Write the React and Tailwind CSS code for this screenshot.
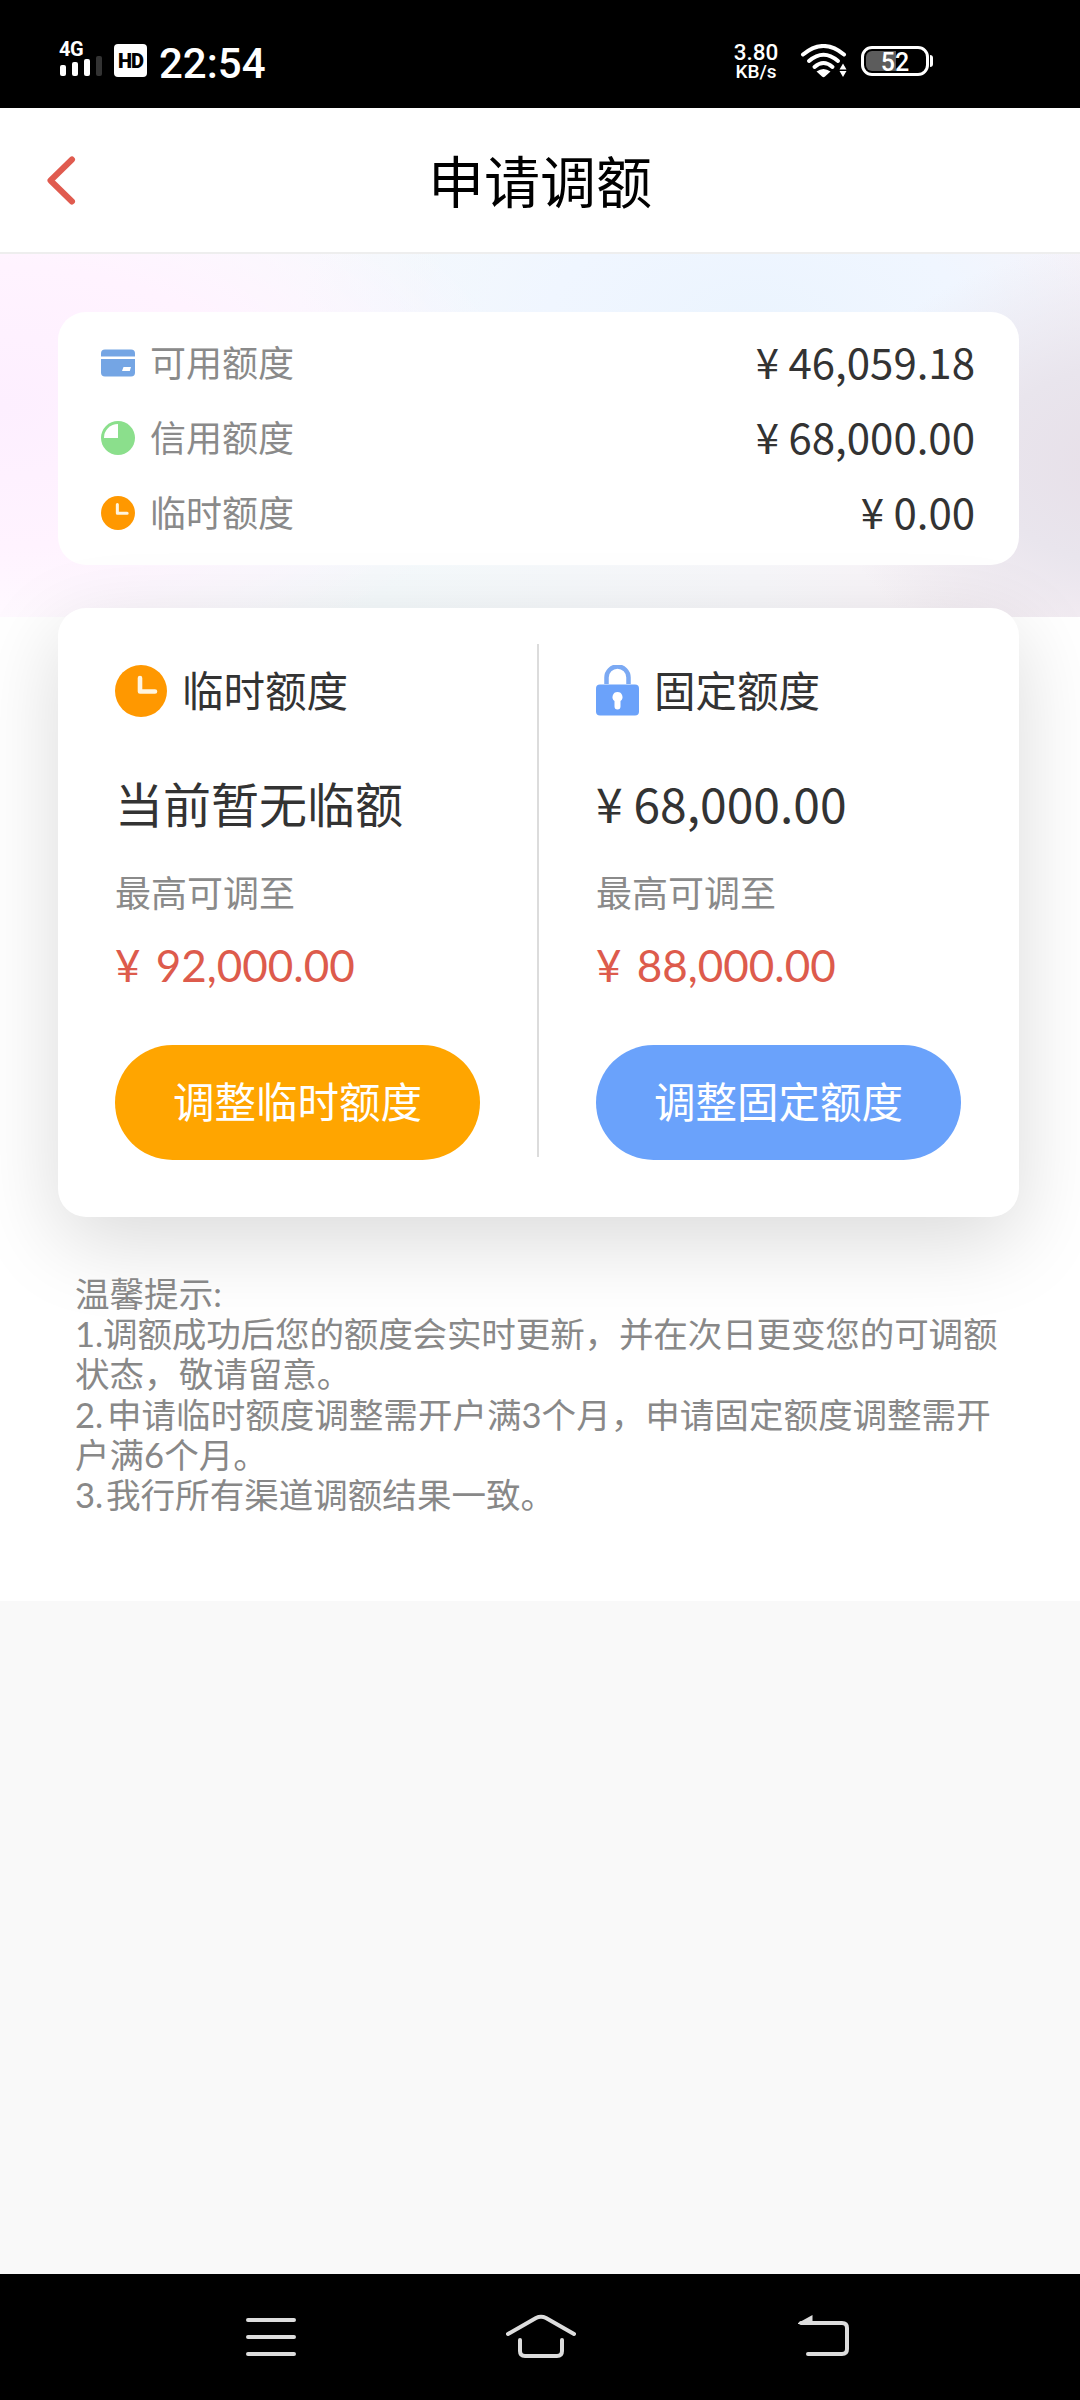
import clsx from "clsx";

const summary = [
    { label: "可用额度", amount: "46,059.18", Icon: CardIcon },
    { label: "信用额度", amount: "68,000.00", Icon: PieIcon },
    { label: "临时额度", amount: "0.00", Icon: SmallClockIcon },
];

const tips = [
    { no: "1.", noClass: "w-7", text: "调额成功后您的额度会实时更新，并在次日更变您的可调额", textClass: "tracking-[-0.150px]" },
    { text: "状态，敬请留意。" },
    { no: "2.", noClass: "w-[32px]", text: "申请临时额度调整需开户满3个月，申请固定额度调整需开" },
    { text: "户满6个月。" },
    { no: "3.", noClass: "w-[31px]", text: "我行所有渠道调额结果一致。" },
];

function CardIcon() {
    return (
        <svg width="34" height="34" viewBox="0 0 34 34">
            <rect x="0" y="3.5" width="34" height="27" rx="4" fill="#74a5e4" />
            <rect x="0" y="10.5" width="34" height="2.5" fill="#fff" />
            <path d="M22.5 21h7.5l-1.2 4h-7.8z" fill="#fff" />
        </svg>
    );
}

function PieIcon() {
    return (
        <svg width="34" height="34" viewBox="0 0 34 34">
            <circle cx="17" cy="17" r="17" fill="#8bdf8c" />
            <path d="M17 17H3A14 14 0 0 1 17 3z" fill="#fff" />
        </svg>
    );
}

function SmallClockIcon() {
    return <ClockIcon className="size-[34px]" />;
}

function ClockIcon({ className }) {
    return (
        <svg className={className} viewBox="0 0 52 52">
            <circle cx="26" cy="26" r="26" fill="#ff9800" />
            <path d="M25 13v13.5h15" fill="none" stroke="#fff5e0" strokeWidth="4.6" strokeLinecap="round" strokeLinejoin="round" />
        </svg>
    );
}

function LockIcon() {
    return (
        <svg width="43" height="52" viewBox="0 0 43 52">
            <path d="M10.5 19v-6.5a11 11 0 0 1 22 0V19" fill="none" stroke="#7ba9f3" strokeWidth="4.5" />
            <rect x="0" y="19.5" width="43" height="31" rx="4" fill="#6ba2fa" />
            <path d="M21.5 27a5 5 0 0 1 3 9v5.500a3 3 0 0 1-6 0V36a5 5 0 0 1 3-9z" fill="#fff" />
        </svg>
    );
}

function StatusBar() {
    return (
        <div className="flex h-[108px] items-start bg-black font-[Roboto,sans-serif] text-white">
            <div className="ml-[59px] mt-[39px] w-[43px]">
                <div className="h-[17px] text-[20px] leading-[21px] font-bold tracking-[-0.5px]">4G</div>
                <div className="ml-px flex h-5 items-end gap-[6px]">
                    <span className="h-[11px] w-[6px] rounded-[2px] bg-white" />
                    <span className="h-[14px] w-[6px] rounded-[2px] bg-white" />
                    <span className="h-[17px] w-[6px] rounded-[2px] bg-white" />
                    <span className="h-5 w-[6px] rounded-[2px] bg-[#333]" />
                </div>
            </div>
            <div className="ml-3 mt-11 flex h-[33px] w-[33px] items-center justify-center rounded-[4px] bg-white text-[20px] font-black tracking-[-1px] text-black">
                HD
            </div>
            <div className="ml-[12px] mt-[40px] w-[110px] text-[42px] leading-[48px] font-medium">22:54</div>
            <div className="ml-[464px] mt-[40px] w-[46px] text-center whitespace-nowrap">
                <div className="h-[23px] text-[22.500px] leading-[25px] font-medium">3.80</div>
                <div className="h-5 text-[19px] leading-[18px] font-medium">KB/s</div>
            </div>
            <svg className="ml-[21px] mt-11" width="48" height="34" viewBox="0 0 48 34">
                <g fill="none" stroke="#fff" strokeWidth="4" strokeLinecap="round">
                    <path d="M3 10.500Q23.500-6.500 44 10.500" />
                    <path d="M9 17Q23.500 4.500 38 17" />
                    <path d="M14.500 23Q23.500 15 32.500 23" />
                </g>
                <path d="M16.500 27.500Q23.500 22.500 30.500 27.500L25 32.600Q23.500 34 22 32.600z" fill="#fff" />
                <path d="M43 19.500l3.500 6h-7zM43 33l3.500-6h-7z" fill="#fff" />
            </svg>
            <div className="ml-[13px] mt-[46px] flex items-center">
                <div className="relative flex h-[30px] w-[68px] items-center justify-center rounded-[11px] border-[3px] border-white text-[25px] leading-none font-medium">
                    <span className="absolute left-[2px] top-[2px] h-5 w-[30px] rounded-l-[6px] bg-[#5c5c5c]" />
                    <span className="relative pt-[2px]">52</span>
                </div>
                <span className="ml-px h-3 w-[3px] rounded-r-[3px] bg-white" />
            </div>
        </div>
    );
}

function QuotaColumn({ icon, title, current, currentClass, max, button, buttonClass }) {
    return (
        <div className="pl-[57px] pt-[57px]">
            <div className="flex h-[52px] items-center">
                {icon}
                <span className="ml-[15px] text-[41.500px]">{title}</span>
            </div>
            <div className={clsx("mt-[58px] flex h-[60px] items-center whitespace-pre text-[48px] leading-none", currentClass)}>
                {current}
            </div>
            <div className="mt-[38px] flex h-10 items-center text-[36px] text-[#8a8a8a]">最高可调至</div>
            <div className="mt-[27px] flex h-[50px] items-center whitespace-pre text-[44px] [word-spacing:4px] text-[#dd5b4c]">{max}</div>
            <button className={clsx("mt-[55px] flex h-[115px] w-[365px] items-center justify-center rounded-full text-[41.500px] text-white", buttonClass)}>
                {button}
            </button>
        </div>
    );
}

function NavBar() {
    return (
        <div className="flex h-[126px] items-start bg-black pl-[246px] pt-[39px]">
            <svg width="50" height="46" viewBox="0 0 50 46" fill="none" stroke="#ddd" strokeWidth="4" strokeLinecap="round">
                <path d="M2 7h46M2 24h46M2 41h46" />
            </svg>
            <svg className="ml-[210px]" width="70" height="46" viewBox="0 0 70 46" fill="none" stroke="#ddd" strokeWidth="4" strokeLinecap="round" strokeLinejoin="round">
                <path d="M2 21L30 5Q35 2.500 40 5L68 21" />
                <path d="M14 27v11q0 5 5 5h32q5 0 5-5V27" />
            </svg>
            <svg className="ml-[222px]" width="52" height="46" viewBox="0 0 52 46" fill="none" stroke="#ddd" strokeWidth="4" strokeLinecap="round">
                <path d="M3 10h41q5 0 5 5v21q0 5-5 5H10" />
                <path d="M0 10L14.500 2v9H0z" fill="#ddd" stroke="none" />
            </svg>
        </div>
    );
}

export default function App() {
    return (
        <div className="flex h-[2400px] w-[1080px] flex-col overflow-hidden bg-[#f9f9f9] font-[Lato,'Noto_Sans_CJK_SC',sans-serif] text-[#333]">
            <StatusBar />

            <header className="grid h-[146px] grid-cols-[1fr_auto_1fr] items-center border-b-2 border-[#eee] bg-white">
                <svg className="ml-[46px]" width="30" height="49" viewBox="0 0 30 49" fill="none" stroke="#e05b4f" strokeWidth="6" strokeLinecap="round" strokeLinejoin="round">
                    <path d="M26 3.500L4.500 24.500L26 45.500" />
                </svg>
                <h1 className="pt-[3px] text-[56px] leading-none text-black">申请调额</h1>
            </header>

            <main
                className="h-[1347px] bg-white bg-[radial-gradient(520px_280px_at_0%_42%,#fdefff_0%,#fff3ff_50%,transparent_100%),radial-gradient(300px_220px_at_104%_58%,#e7dfe8_0%,#e9e5ed_45%,transparent_100%),radial-gradient(460px_240px_at_70%_18%,#ebf4fe_0%,#f0f6ff_45%,transparent_100%),linear-gradient(90deg,#ffffff_0%,#f5fafc_35%,#f7f7fa_70%,#faf1f6_100%)] bg-[length:100%_363px] bg-no-repeat px-[58px] pt-[58px]"
            >
                <section className="h-[253px] w-[961px] rounded-[28px] bg-white px-[43px] pt-[13px]">
                    {summary.map(({ label, amount, Icon }) => (
                        <div key={label} className="flex h-[75px] items-center">
                            <Icon />
                            <span className="ml-[15px] text-[36px] text-[#8a8a8a]">{label}</span>
                            <span className="ml-auto pb-[3px] pr-px font-['Noto_Sans_CJK_SC',sans-serif] text-[42px] leading-none">¥ {amount}</span>
                        </div>
                    ))}
                </section>

                <section className="mt-[43px] flex h-[609px] w-[961px] rounded-[28px] bg-white shadow-[0_24px_84px_rgba(0,0,0,0.15)]">
                    <div className="w-[479px]">
                        <QuotaColumn
                            icon={<ClockIcon className="size-[52px]" />}
                            title="临时额度"
                            current="当前暂无临额"
                            max="¥ 92,000.00"
                            button="调整临时额度"
                            buttonClass="bg-[#ffa500]"
                        />
                    </div>
                    <div className="mt-9 h-[513px] w-[2px] bg-[#dcdcdc]" />
                    <QuotaColumn
                        icon={<LockIcon />}
                        title="固定额度"
                        current="¥ 68,000.00"
                        currentClass="pb-[6px] font-['Noto_Sans_CJK_SC',sans-serif]"
                        max="¥ 88,000.00"
                        button="调整固定额度"
                        buttonClass="bg-[#6aa2fb]"
                    />
                </section>

                <div className="ml-[17px] mt-[57px] text-[34.560px] leading-[40.200px] whitespace-nowrap text-[#888]">
                    <p>温馨提示:</p>
                    {tips.map(({ no, noClass, text, textClass }) => (
                        <p key={text} className="flex">
                            {no && <span className={noClass}>{no}</span>}
                            <span className={textClass}>{text}</span>
                        </p>
                    ))}
                </div>
            </main>

            <div className="flex-1" />
            <NavBar />
        </div>
    );
}
